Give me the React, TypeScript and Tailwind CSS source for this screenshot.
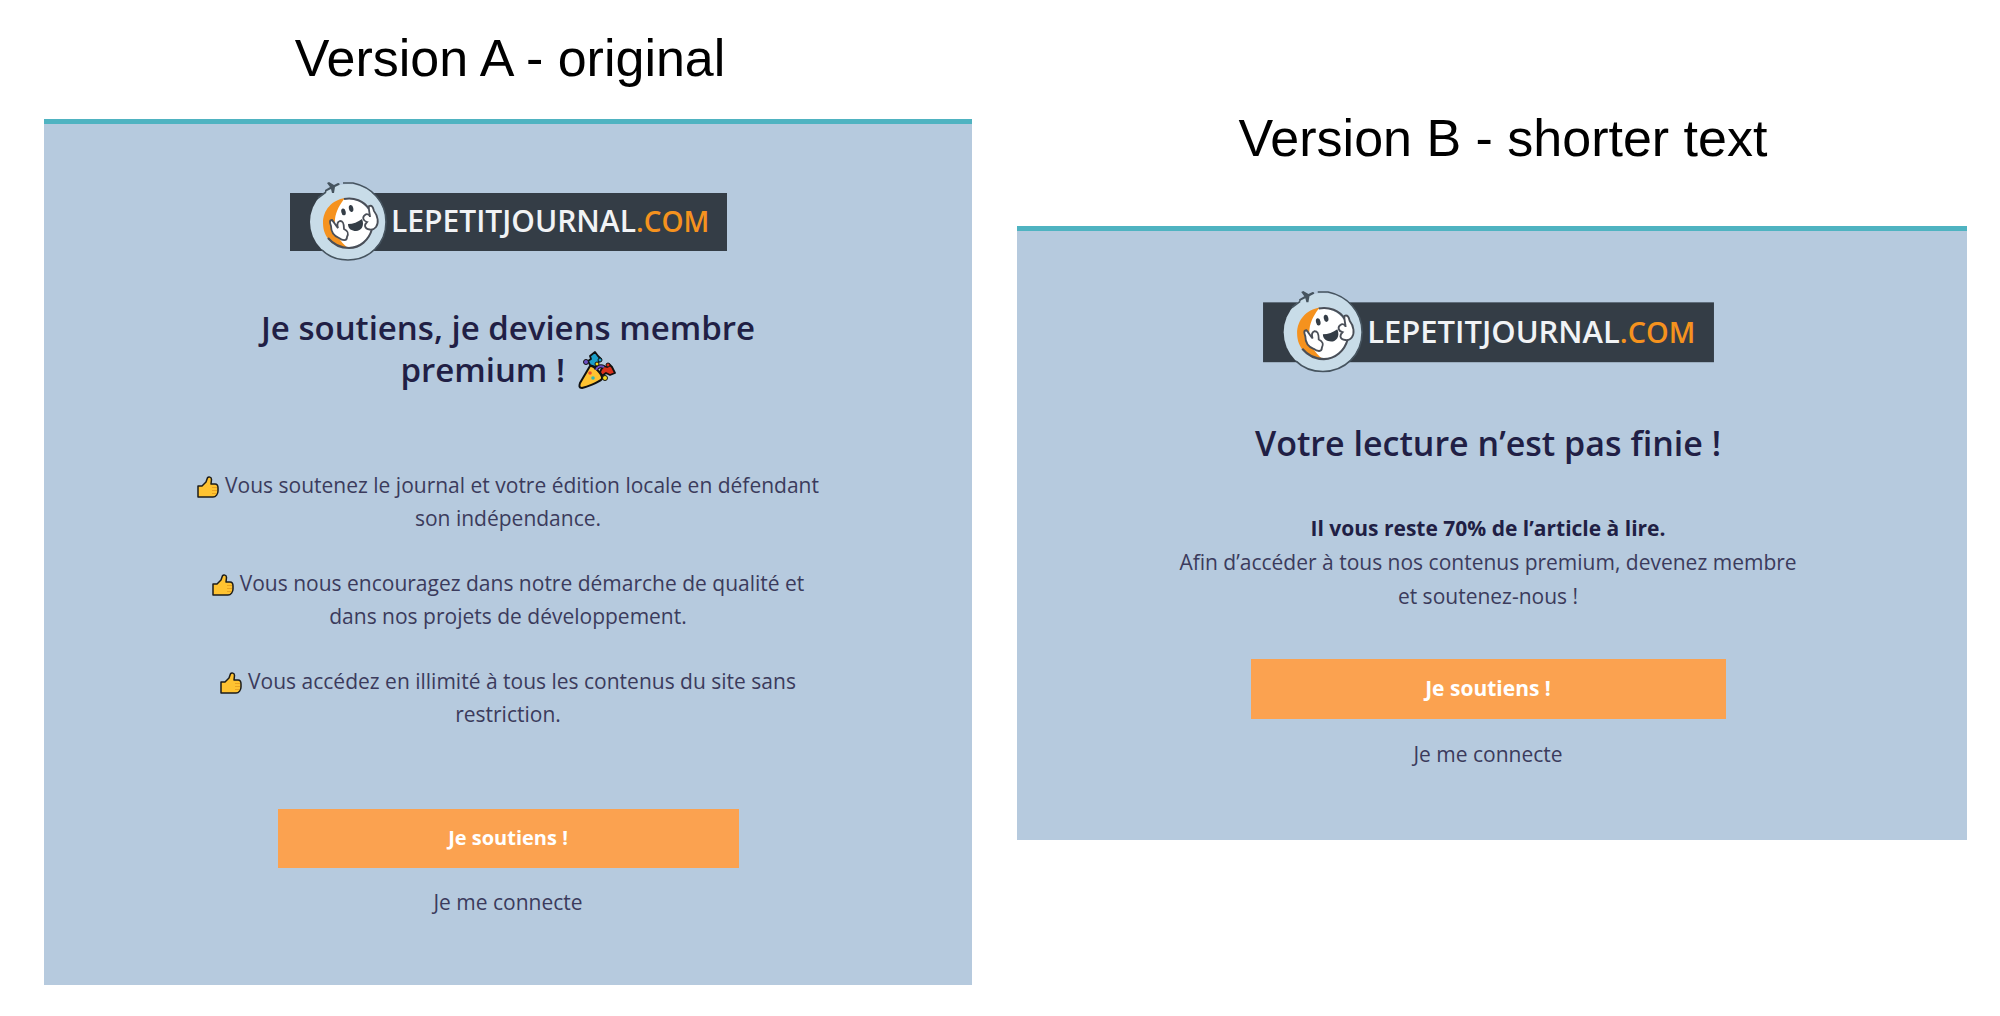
import { clsx } from "clsx";

const Mascot = () => (
  <g>
    <circle cx="58" cy="40" r="38" fill="#c8dce8" />
    <path
      d="M53 1 H63 C82 5 96 20 96 40 C96 62 79 78 58 78 C48 78 39 75 32 68 M28 16 L36 10"
      fill="none"
      stroke="#46545f"
      strokeWidth="1.6"
    />
    {/* plane */}
    <path
      d="M35 8 L40 5 L37 1 L39 0 L44 3 L48 1 C50 1 50 3 49 3 L45 5 L44 11 L42 11 L41 7 L37 9 L35 11 Z"
      fill="#46545f"
    />
    <circle cx="58" cy="41" r="24" fill="#fff" />
    <path d="M55 16 C42 18 33 28 33 41 C33 56 44 66 58 66 C50 60 43 50 45 37 C46 29 50 22 55 16 Z" fill="#f5921e" />
    <path d="M54 17 C64 15 74 19 79 27 M82 47 C79 58 70 66 59 66 C51 66 43 62 38 56" fill="none" stroke="#4a4f58" strokeWidth="2" />
    <ellipse cx="53.500" cy="30" rx="2.200" ry="3.500" fill="#343d46" transform="rotate(-12 53 30)" />
    <ellipse cx="61" cy="26.500" rx="2.200" ry="3.500" fill="#343d46" transform="rotate(-12 61 26)" />
    <path d="M58 42 C63 42 68 40 72 37 C75 44 71 49 66 49 C62 49 58 47 58 42 Z" fill="#343d46" />
    <path
      d="M42 38 C39 38 40 41 41 44 C41 51 44 54 49 56 C53 59 57 59 57 55 C59 51 58 49 54 47 C54 41 53 39 50 39 C47 40 47 43 48 46 C46 44 44 40 42 38 Z"
      fill="#fff"
      stroke="#4a4f58"
      strokeWidth="1.800"
    />
    <path
      d="M79 24 C82 23 83 25 84 29 C88 34 89 41 86 45 C83 49 76 48 75 44 C75 42 76 41 77 40 C73 39 72 35 75 33 C77 31 80 33 80 35 C80 31 78 27 79 24 Z"
      fill="#fff"
      stroke="#4a4f58"
      strokeWidth="1.800"
    />
  </g>
);

const Logo = ({ className }: { className: string }) => (
  <svg viewBox="0 0 437 79" className={className} role="img" aria-label="lepetitjournal.com">
    <rect y="11" width="437" height="58" fill="#343d46" />
    <Mascot />
    <text x="101" y="50" fontFamily="Open Sans, sans-serif" fontSize="30" fontWeight="600" fill="#f1f3f5">
      LEPETITJOURNAL
      <tspan fill="#f5921e" fontSize="28">.COM</tspan>
    </text>
  </svg>
);

const ThumbsUp = () => (
  <svg viewBox="0 0 22 22" className="mr-1.5 inline-block size-[22px] align-[-5px]" aria-hidden="true">
    <path
      d="M1 10 H5 L9 6 L10.500 1.800 C11.500 0.500 14.500 0.800 14.500 3.500 L14 8 H18 C20 8 21 9.500 21 12 V15 C21 18 19 21 16 21 H1 Z"
      fill="#ffc331"
      stroke="#1d1d1b"
      strokeWidth="1.500"
      strokeLinejoin="round"
    />
    <path d="M15 11.500 H20 M15 14.500 H20 M15 17.500 H19" stroke="#e39a1d" strokeWidth="0.800" />
  </svg>
);

const PartyPopper = () => (
  <svg viewBox="0 0 38 38" className="ml-1 inline-block size-[38px] align-[-7px]" aria-hidden="true">
    <path d="M12 14 L10 10 L13 8 L12 5 L17 1 L20 5 L23 8 L20 12 L18 16 Z" fill="#1b9fc9" stroke="#111" strokeWidth="1.800" strokeLinejoin="round" />
    <path d="M22 21 L25 15 L29 16 L31 13 L34 16 L37 22 L32 24 L28 22 L24 25 Z" fill="#d9301a" stroke="#111" strokeWidth="1.800" strokeLinejoin="round" />
    <path d="M12 15 C15 14 25 23 24 28 C20 32 8 36 4 37 C1 37 1 35 2 32 Z" fill="#ffc331" stroke="#111" strokeWidth="2" strokeLinejoin="round" />
    <path d="M18 19 C19 16 22 14 26 16" fill="none" stroke="#111" strokeWidth="4" />
    <path d="M18 19 C19 16 22 14 26 16" fill="none" stroke="#6d4fc4" strokeWidth="2" />
    <circle cx="8" cy="11" r="2.500" fill="#6d4fc4" stroke="#111" />
    <circle cx="22" cy="9" r="2" fill="#1b9fc9" stroke="#111" />
    <circle cx="19" cy="13" r="2" fill="#f4dc1c" stroke="#111" />
    <circle cx="30" cy="14" r="2" fill="#d9301a" stroke="#111" />
    <circle cx="27" cy="27" r="2.500" fill="#f4dc1c" stroke="#111" />
    <circle cx="12" cy="22" r="1.800" fill="#ee4b2b" />
    <circle cx="15" cy="27" r="1.800" fill="#35b8b4" />
  </svg>
);

const benefits = [
  "Vous soutenez le journal et votre édition locale en défendant son indépendance.",
  "Vous nous encouragez dans notre démarche de qualité et dans nos projets de développement.",
  "Vous accédez en illimité à tous les contenus du site sans restriction.",
];

const Actions = ({ className }: { className: string }) => (
  <div className={clsx("flex max-w-full flex-col items-center", className)}>
    <button type="button" className="w-full bg-[#fba250] pt-3 pb-[14px] font-bold text-white">
      Je soutiens !
    </button>
    <a href="#connexion" className="mt-[18px] text-[21px]">
      Je me connecte
    </a>
  </div>
);

export default function App() {
  return (
    <main className="grid grid-cols-[928fr_950fr] items-start gap-x-[45px] bg-white pl-11 pr-[33px] font-['Open_Sans',sans-serif]">
      <section>
        <h1 className="pt-7 pl-1 text-center font-['Liberation_Sans',sans-serif] text-[52px] leading-[60px] text-black">
          Version A - original
        </h1>
        <article className="mt-[31px] flex flex-col items-center border-t-[5px] border-[#4fb3c1] bg-[#b6cade] pt-[58px] pb-[66px] text-center text-[21px] leading-[33px] text-[#3b3b5c]">
          <Logo className="w-[437px]" />
          <h2 className="mt-[46px] max-w-[560px] text-[33px] leading-[42px] font-semibold text-[#211f45]">
            Je soutiens, je deviens membre premium ! <PartyPopper />
          </h2>
          <ul className="mt-[78px] flex max-w-[640px] flex-col gap-8">
            {benefits.map((benefit) => (
              <li key={benefit}>
                <ThumbsUp />
                {benefit}
              </li>
            ))}
          </ul>
          <Actions className="mt-[78px] w-[461px] text-[20px]" />
        </article>
      </section>

      <section>
        <h1 className="pt-[108px] pl-[22px] text-center font-['Liberation_Sans',sans-serif] text-[52px] leading-[60px] text-black">
          Version B - shorter text
        </h1>
        <article className="mt-[58px] flex flex-col items-center border-t-[5px] border-[#4fb3c1] bg-[#b6cade] pt-[60px] pr-2 pb-[69px] text-center text-[21px] leading-[34px] text-[#3b3b5c]">
          <Logo className="w-[451px]" />
          <h2 className="mt-[49px] text-[34px] leading-[42px] font-semibold text-[#211f45]">
            Votre lecture n’est pas finie !
          </h2>
          <p className="mt-[47px] max-w-[640px]">
            <strong className="block text-[#211f45]">Il vous reste 70% de l’article à lire.</strong>
            Afin d’accéder à tous nos contenus premium, devenez membre et soutenez-nous !
          </p>
          <Actions className="mt-[46px] w-[475px]" />
        </article>
      </section>
    </main>
  );
}
